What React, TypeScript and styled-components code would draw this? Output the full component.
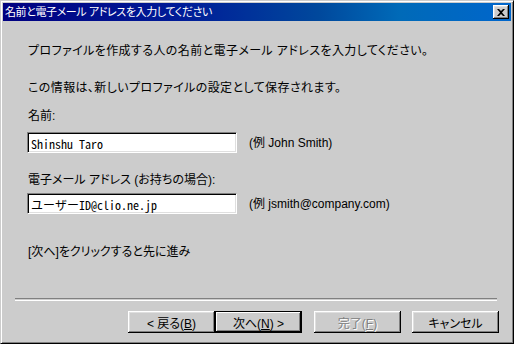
import React from 'react';
import styled, { createGlobalStyle } from 'styled-components';

const GlobalStyle = createGlobalStyle`
  html, body {
    margin: 0;
    padding: 0;
    background: #cccccc;
  }
  body {
    font-family: 'Liberation Sans', 'Noto Sans CJK JP', sans-serif;
    font-size: 12px;
    color: #000000;
  }
`;

const Window = styled.div`
  width: 514px;
  height: 344px;
  box-sizing: border-box;
  background: #cccccc;
  border: 1px solid;
  border-color: #cccccc #000000 #000000 #cccccc;
  box-shadow: inset 1px 1px #ffffff, inset -1px -1px #808080;
  padding: 2px;
  display: flex;
  flex-direction: column;
`;

const TitleBar = styled.div`
  height: 18px;
  flex-shrink: 0;
  display: flex;
  align-items: center;
  justify-content: space-between;
  padding: 0 2px;
  background: linear-gradient(to right, #000080 0%, #001c98 35%, #00489c 62%, #006ab8 78%, #0066cc 100%);
  color: #ffffff;
`;

const TitleText = styled.span`
  font-size: 11px;
  line-height: 16px;
  letter-spacing: -0.4px;
  font-feature-settings: 'palt' 1;
  white-space: nowrap;
`;

const CloseButton = styled.div`
  width: 16px;
  height: 14px;
  box-sizing: border-box;
  background: #cccccc;
  display: flex;
  align-items: center;
  justify-content: center;
  box-shadow: inset -1px -1px #000000, inset 1px 1px #ffffff, inset -2px -2px #808080, inset 2px 2px #dfdfdf;
`;

const Body = styled.div`
  flex: 1;
  display: flex;
  flex-direction: column;
`;

const Main = styled.div`
  padding-left: 25px;
  display: flex;
  flex-direction: column;
`;

const Text = styled.div<{ $top: number; $spacing?: number }>`
  margin-top: ${p => p.$top}px;
  line-height: 16px;
  font-size: 12px;
  letter-spacing: ${p => p.$spacing ?? 0}px;
  font-feature-settings: 'palt' 1;
  white-space: nowrap;
`;

const FieldRow = styled.div<{ $top: number }>`
  margin-top: ${p => p.$top}px;
  margin-left: -1px;
  display: flex;
  align-items: center;
  gap: 12px;
`;

const Field = styled.input`
  width: 210px;
  height: 21px;
  box-sizing: border-box;
  margin: 0;
  padding: 1px 3px 0;
  border: 1px solid;
  border-color: #808080 #ffffff #ffffff #808080;
  box-shadow: inset 1px 1px #000000, inset -1px -1px #dfdfdf;
  background: #ffffff;
  color: #000000;
  font: 12px 'Noto Sans Mono CJK JP', 'Liberation Mono', monospace;
  outline: none;
`;

const Hint = styled.span`
  font-size: 12px;
  line-height: 16px;
  white-space: nowrap;
`;

const Separator = styled.div`
  margin: 38px 14px 0 12px;
  height: 1px;
  border-top: 1px solid #808080;
  border-bottom: 1px solid #ffffff;
`;

const ButtonRow = styled.div`
  margin-top: 10px;
  padding-right: 12px;
  display: flex;
  justify-content: flex-end;
`;

const Button = styled.button<{ $default?: boolean; $gap?: number }>`
  width: 87px;
  height: 22px;
  margin: 0 0 0 ${p => p.$gap ?? 0}px;
  padding: 0;
  border: none;
  background: #cccccc;
  color: #000000;
  font: 12px 'Liberation Sans', 'Noto Sans CJK JP', sans-serif;
  font-feature-settings: 'palt' 1;
  box-shadow: ${p =>
    p.$default
      ? 'inset 0 0 0 1px #000000, inset -2px -2px #000000, inset 2px 2px #ffffff, inset -3px -3px #808080'
      : 'inset -1px -1px #000000, inset 1px 1px #ffffff, inset -2px -2px #808080, inset 2px 2px #dfdfdf'};

  &:disabled {
    color: #808080;
    text-shadow: 1px 1px #ffffff;
  }

  u {
    text-underline-offset: 1px;
  }
`;

export default function App() {
  return (
    <>
      <GlobalStyle />
      <Window>
        <TitleBar>
          <TitleText>名前と電子メール アドレスを入力してください</TitleText>
          <CloseButton>
            <svg width="8" height="7" viewBox="0 0 8 7">
              <path d="M0 0h2l2 2 2-2h2L5 3.5 8 7H6L4 5 2 7H0l3-3.5z" fill="#000000" />
            </svg>
          </CloseButton>
        </TitleBar>

        <Body>
          <Main>
            <Text $top={22} $spacing={0.4}>
              プロファイルを作成する人の名前と電子メール アドレスを入力してください。
            </Text>
            <Text $top={21} $spacing={0.4}>
              この情報は、新しいプロファイルの設定として保存されます。
            </Text>

            <Text $top={12}>名前:</Text>
            <FieldRow $top={8}>
              <Field defaultValue="Shinshu Taro" />
              <Hint>(例 John Smith)</Hint>
            </FieldRow>

            <Text $top={19}>電子メール アドレス (お持ちの場合):</Text>
            <FieldRow $top={5}>
              <Field defaultValue="ユーザーID@clio.ne.jp" />
              <Hint>(例 jsmith@company.com)</Hint>
            </FieldRow>

            <Text $top={30}>[次へ]をクリックすると先に進み</Text>
          </Main>

          <Separator />

          <ButtonRow>
            <Button>&lt; 戻る(<u>B</u>)</Button>
            <Button $default>次へ(<u>N</u>) &gt;</Button>
            <Button $gap={12} disabled>完了(<u>F</u>)</Button>
            <Button $gap={11}>キャンセル</Button>
          </ButtonRow>
        </Body>
      </Window>
    </>
  );
}
